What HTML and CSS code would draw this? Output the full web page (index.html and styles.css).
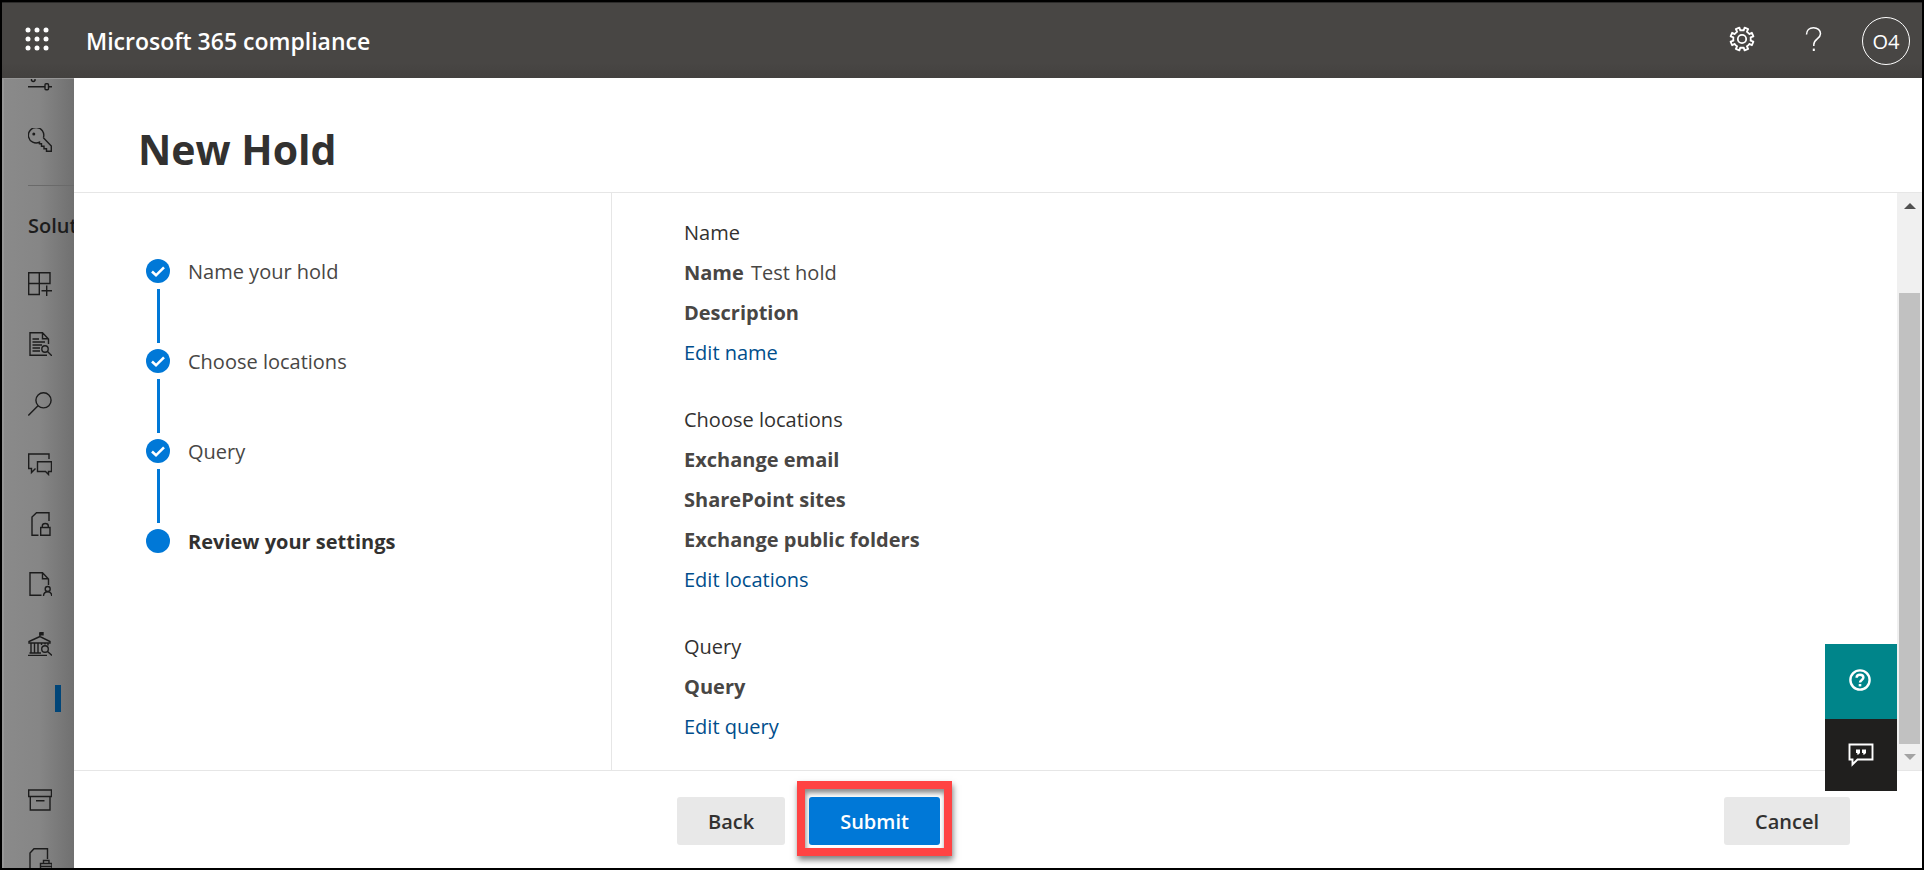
FILE: index.html
```html
<!DOCTYPE html>
<html lang="en">
<head>
<meta charset="utf-8">
<title>Microsoft 365 compliance</title>
<link rel="stylesheet" href="styles.css">
</head>
<body>
<div class="app">
  <header class="topbar">
    <button class="icon-button launcher" aria-label="App launcher">
      <svg width="24" height="24" viewBox="0 0 24 24" fill="#fff"><circle cx="3" cy="3" r="2.5"/><circle cx="12" cy="3" r="2.5"/><circle cx="21" cy="3" r="2.5"/><circle cx="3" cy="12" r="2.5"/><circle cx="12" cy="12" r="2.5"/><circle cx="21" cy="12" r="2.5"/><circle cx="3" cy="21" r="2.5"/><circle cx="12" cy="21" r="2.5"/><circle cx="21" cy="21" r="2.5"/></svg>
    </button>
    <span class="product">Microsoft 365 compliance</span>
    <div class="tools">
      <button class="icon-button tool" aria-label="Settings">
        <svg width="26" height="26" viewBox="-13 -13 26 26" fill="none" stroke="#fff" stroke-width="1.8" stroke-linejoin="round"><path d="M-2.6-11.4-1.7-8.6A8.8 8.8 0 0 1 1.7-8.6L2.6-11.4 6.2-9.9 4.9-7.3A8.8 8.8 0 0 1 7.3-4.9L9.9-6.2 11.4-2.6 8.6-1.7A8.8 8.8 0 0 1 8.6 1.7L11.4 2.6 9.9 6.2 7.3 4.9A8.8 8.8 0 0 1 4.9 7.3L6.2 9.9 2.6 11.4 1.7 8.6A8.8 8.8 0 0 1-1.7 8.6L-2.6 11.4-6.2 9.9-4.9 7.3A8.8 8.8 0 0 1-7.3 4.9L-9.9 6.2-11.4 2.6-8.6 1.7A8.8 8.8 0 0 1-8.6-1.7L-11.4-2.6-9.9-6.2-7.3-4.9A8.8 8.8 0 0 1-4.9-7.3L-6.2-9.9Z"/><circle r="4.2"/></svg>
      </button>
      <button class="icon-button tool" aria-label="Help">
        <svg width="18" height="26" viewBox="0 0 18 26" fill="none" stroke="#fff" stroke-width="1.5"><path d="M1.500 8.500C1.500 4.300 4.500 1.700 8.500 1.700S15.500 4.200 15.500 7.700C15.500 12.800 8.800 13 8.800 18.500V20"/><path d="M8.800 22.600V25" stroke-width="2"/></svg>
      </button>
      <button class="avatar" aria-label="Account">O4</button>
    </div>
  </header>
  <div class="body">
    <nav class="sidebar">
      <a class="nav-item clipped" href="#" aria-label="Data connectors"><svg width="24" height="13" viewBox="0 11 24 13"><path d="M3.500 11v1.500q1.800 2 3.500 0V11M0 18.700h17M20.500 18.700H24"/><rect x="17" y="15.700" width="3.500" height="6" rx="1"/></svg></a>
      <a class="nav-item" href="#" aria-label="Permissions"><svg width="24" height="24" viewBox="0 0 24 24"><path d="M15.400 9.700 23.300 18V23.300H18.500V20.700H16V18.200H13.500V15.700H11.500V14.200A7.700 7.700 0 1 1 15.400 9.700"/><circle cx="5.800" cy="6" r=".8" fill="#1c1c1c"/></svg></a>
      <hr class="nav-rule">
      <h2 class="nav-heading">Solutions</h2>
      <a class="nav-item" href="#" aria-label="Catalog"><svg width="24" height="24" viewBox="0 0 24 24"><path d="M.7.700H22V11.500H.7ZM11.300.700V22.500H.7V11.500M18.700 13.500V24M13.500 18.700H24"/></svg></a>
      <a class="nav-item" href="#" aria-label="Audit"><svg width="24" height="24" viewBox="0 0 24 24"><path d="M20.500 12V7L14.500.7H2V23.300H19M14.500.700V6.700H20.500M4.500 7H11M4.500 10H17M4.500 13H14M4.500 16H12M4.500 19H12M19.500 19.500 24 24"/><circle cx="17" cy="17" r="3.200"/></svg></a>
      <a class="nav-item" href="#" aria-label="Content search"><svg width="24" height="24" viewBox="0 0 24 24"><circle cx="15.500" cy="8.300" r="7.600"/><path d="M10 13.700.300 23.500"/></svg></a>
      <a class="nav-item" href="#" aria-label="Communication compliance"><svg width="24" height="24" viewBox="0 0 24 24"><path d="M21 7V2H.7V16.500H3.500V20.500L7.500 16.500M9.500 9.700H23.500V19.500H20.500V22.500L17.500 19.500H9.500Z"/></svg></a>
      <a class="nav-item" href="#" aria-label="Data loss prevention"><svg width="24" height="24" viewBox="0 0 24 24"><path d="M21 9V.7H8.500L4 5V23.300H10.500M12.700 15.500H22V23.300H12.700ZM14.300 15.500V14Q14.300 11.500 17.300 11.500T20.300 14V15.500"/></svg></a>
      <a class="nav-item" href="#" aria-label="Data subject requests"><svg width="24" height="24" viewBox="0 0 24 24"><path d="M20.500 13V7L14.500.7H2V23.300H13.500M14.500.700V6.700H20.500M15.500 24Q15.700 19.700 19.700 19.700T23.700 24"/><circle cx="19.700" cy="17" r="2.500"/></svg></a>
      <a class="nav-item" href="#" aria-label="eDiscovery"><svg width="24" height="24" viewBox="0 0 24 24"><path d="M12 4.500 1 9.500V11H22V9.500ZM12 4.500V1M3 11V21M6.500 11V21M10 11V21M1.500 21H13M0 23.500H19M13.500 11V13M17 11V12.500M20 11V13.500M19.500 19.500 24 23.500"/><path d="M12 .5H15V2.700H12Z" fill="#1c1c1c"/><circle cx="17" cy="17" r="3.300"/></svg></a>
      <a class="nav-sub selected" href="#" aria-label="Core"></a>
      <a class="nav-sub" href="#" aria-label="Advanced"></a>
      <a class="nav-item" href="#" aria-label="Information governance"><svg width="24" height="24" viewBox="0 0 24 24"><path d="M.7 2H23.500V8.500H.7ZM2.300 8.500V22H22V8.500M8 12.700H16.500"/></svg></a>
      <a class="nav-item" href="#" aria-label="Insider risk management"><svg width="24" height="24" viewBox="0 0 24 24"><path d="M19.500 11V.7H6L2 5V23.300H11M12.500 15.500H24V22H12.500ZM15.500 15.500V12.500H21V15.500M12.500 18.500H24"/></svg></a>
    </nav>
    <main class="panel">
      <h1 class="panel-title">New Hold</h1>
      <div class="panel-body">
        <ol class="steps">
          <li class="step"><span class="marker"><svg width="24" height="24" viewBox="0 0 24 24"><path d="M6 12.500 10 16.300 18 8.300"/></svg></span><span class="step-label">Name your hold</span></li>
          <li class="step"><span class="marker"><svg width="24" height="24" viewBox="0 0 24 24"><path d="M6 12.500 10 16.300 18 8.300"/></svg></span><span class="step-label">Choose locations</span></li>
          <li class="step"><span class="marker"><svg width="24" height="24" viewBox="0 0 24 24"><path d="M6 12.500 10 16.300 18 8.300"/></svg></span><span class="step-label">Query</span></li>
          <li class="step current"><span class="marker"></span><span class="step-label">Review your settings</span></li>
        </ol>
        <div class="review">
          <section class="group">
            <h3>Name</h3>
            <p><b>Name</b> Test hold</p>
            <p><b>Description</b></p>
            <p><a href="#">Edit name</a></p>
          </section>
          <section class="group">
            <h3>Choose locations</h3>
            <p><b>Exchange email</b></p>
            <p><b>SharePoint sites</b></p>
            <p><b>Exchange public folders</b></p>
            <p><a href="#">Edit locations</a></p>
          </section>
          <section class="group">
            <h3>Query</h3>
            <p><b>Query</b></p>
            <p><a href="#">Edit query</a></p>
          </section>
        </div>
        <div class="scrollbar">
          <button class="arrow" aria-label="Scroll up"><svg width="12" height="6" viewBox="0 0 12 6"><path d="M0 6 6 0 12 6Z" fill="#505050"/></svg></button>
          <div class="track"><div class="thumb"></div></div>
          <button class="arrow" aria-label="Scroll down"><svg width="12" height="6" viewBox="0 0 12 6"><path d="M0 0 6 6 12 0Z" fill="#a3a3a3"/></svg></button>
        </div>
        <div class="floating">
          <button class="float-help" aria-label="Need help?"><svg width="22" height="22" viewBox="0 0 22 22" fill="none" stroke="#fff"><circle cx="11" cy="11" r="9.600" stroke-width="2.400"/><path d="M7.600 8.700C7.600 6.800 9 5.700 11 5.700S14.400 6.900 14.400 8.600C14.400 10.900 11 11 11 13.600" stroke-width="2.400"/><path d="M11 15V17.400" stroke-width="2.600"/></svg></button>
          <button class="float-feedback" aria-label="Give feedback"><svg width="26" height="24" viewBox="0 0 26 24" fill="none" stroke="#fff" stroke-width="1.900"><path d="M1.500 1.500H24.500V16.500H9.500L4.500 21.500V16.500H1.500Z"/><path d="M8 6.500H12V10L10.500 11.500H8.700L9.500 10H8ZM14 6.500H18V10L16.500 11.500H14.700L15.500 10H14Z" fill="#fff" stroke="none"/></svg></button>
        </div>
      </div>
      <footer class="actions">
        <button class="btn">Back</button>
        <div class="highlight"><button class="btn primary">Submit</button></div>
        <button class="btn cancel">Cancel</button>
      </footer>
    </main>
  </div>
</div>
</body>
</html>
```

FILE: styles.css
```css
* { box-sizing: border-box; }

body {
  margin: 0;
  font-family: "Open Sans", "Noto Sans", sans-serif;
  font-size: 20px;
  line-height: 40px;
  color: #484644;
  background: #fff;
}

button {
  margin: 0;
  padding: 0;
  border: 0;
  background: none;
  font: inherit;
  color: inherit;
  cursor: pointer;
}

svg { display: block; }

h1, h2, h3, p, ol { margin: 0; padding: 0; font-size: inherit; font-weight: 400; }

.app {
  display: flex;
  flex-direction: column;
  height: 100vh;
  border: 2px solid #000;
}

.topbar {
  display: flex;
  flex: none;
  align-items: center;
  height: 76px;
  padding: 0 12px 0 23px;
  background: linear-gradient(#484644 80%, #43413f);
  border-top: 1px solid #2c2b2a;
  color: #fff;
}

.icon-button { display: flex; align-items: center; justify-content: center; }
.launcher { margin-bottom: 4px; }

.product {
  margin-left: 37px;
  font-size: 23px;
  font-weight: 600;
}

.tools { display: flex; align-items: center; margin-left: auto; }
.tool { width: 72px; height: 48px; margin-bottom: 4px; }

.avatar {
  width: 48px;
  height: 48px;
  margin-left: 12px;
  padding-top: 2px;
  border: 1px solid #fff;
  border-radius: 50%;
}

.body { display: flex; flex: 1; min-height: 0; }

.sidebar {
  flex: none;
  width: 72px;
  overflow: hidden;
  border-left: 2px solid #969696;
  border-top: 1px solid #969696;
  background: linear-gradient(90deg, #8a8a8a, #868686 50%, #707070);
  color: #1c1c1c;
}

.nav-item { display: flex; align-items: center; height: 60px; padding-left: 24px; }
.nav-item.clipped { align-items: flex-start; height: 31px; }
.nav-item svg { flex: none; fill: none; stroke: #1c1c1c; stroke-width: 1.4; }
.nav-rule { height: 1px; margin: 15px 0 0 24px; border: 0; background: #6a6a6a; }

.nav-heading {
  height: 68px;
  padding: 20px 0 0 24px;
  font-weight: 600;
  white-space: nowrap;
}

.nav-sub { display: flex; align-items: center; height: 48px; padding-left: 51px; }
.nav-sub.selected::before { content: ""; width: 6px; height: 27px; background: #004578; }

.panel { display: flex; flex: 1; flex-direction: column; min-width: 0; background: #fff; }

.panel-title {
  flex: none;
  height: 115px;
  padding: 41px 64px 0;
  border-bottom: 1px solid #e6e6e6;
  font-size: 41px;
  line-height: 60px;
  font-weight: 700;
  color: #323130;
}

.panel-body { position: relative; display: flex; flex: 1; min-height: 0; }

.steps {
  flex: none;
  width: 538px;
  padding: 58px 72px;
  border-right: 1px solid #e6e6e6;
  list-style: none;
}

.step { position: relative; display: flex; align-items: center; gap: 18px; height: 40px; margin-bottom: 50px; }
.step-label { padding-top: 2px; }

.step:not(:last-child)::after {
  content: "";
  position: absolute;
  left: 11px;
  top: 38px;
  width: 3px;
  height: 54px;
  background: #0078d7;
}

.step.current { font-weight: 700; color: #323130; }
.marker { width: 24px; height: 24px; border-radius: 50%; background: #0078d7; }
.marker svg { fill: none; stroke: #fff; stroke-width: 2.6; }

.review { flex: 1; padding: 20px 72px 0; overflow: hidden; }
.group { margin-bottom: 27px; }
.group h3 { font-weight: 500; color: #323130; }
.group b { margin-right: 2px; font-weight: 700; }
.group a { color: #004e8c; text-decoration: none; }

.scrollbar { display: flex; flex: none; flex-direction: column; width: 25px; background: #f0f0f0; }
.arrow { display: flex; align-items: center; justify-content: center; height: 26px; }
.track { display: flex; flex: 1; flex-direction: column; justify-content: flex-end; padding: 0 2px; }
.thumb { height: 86%; background: #c1c1c1; }

.floating { position: absolute; right: 25px; bottom: -21px; display: flex; flex-direction: column; width: 72px; }
.floating button { display: flex; align-items: center; justify-content: center; }
.floating .float-help { height: 75px; padding: 0 2px 4px 0; background: #00858a; }
.floating .float-feedback { height: 72px; background: #201f1e; }

.actions {
  display: flex;
  flex: none;
  align-items: flex-start;
  height: 98px;
  padding: 10px 72px 0 603px;
  border-top: 1px solid #e6e6e6;
}

.btn {
  height: 48px;
  margin-top: 16px;
  padding: 2px 31px 0;
  border-radius: 3px;
  background: #e8e8e8;
  font-weight: 600;
  line-height: 40px;
  color: #323130;
}

.highlight {
  display: flex;
  margin: 0 12px;
  padding: 8px 4px 3px;
  border: 8px solid #ff4343;
  box-shadow: 1px 4px 6px rgba(0, 0, 0, .5), inset 1px 4px 5px rgba(0, 0, 0, .45);
}

.primary { margin-top: 0; background: #0078d7; color: #fff; }
.cancel { margin-left: auto; }
```
